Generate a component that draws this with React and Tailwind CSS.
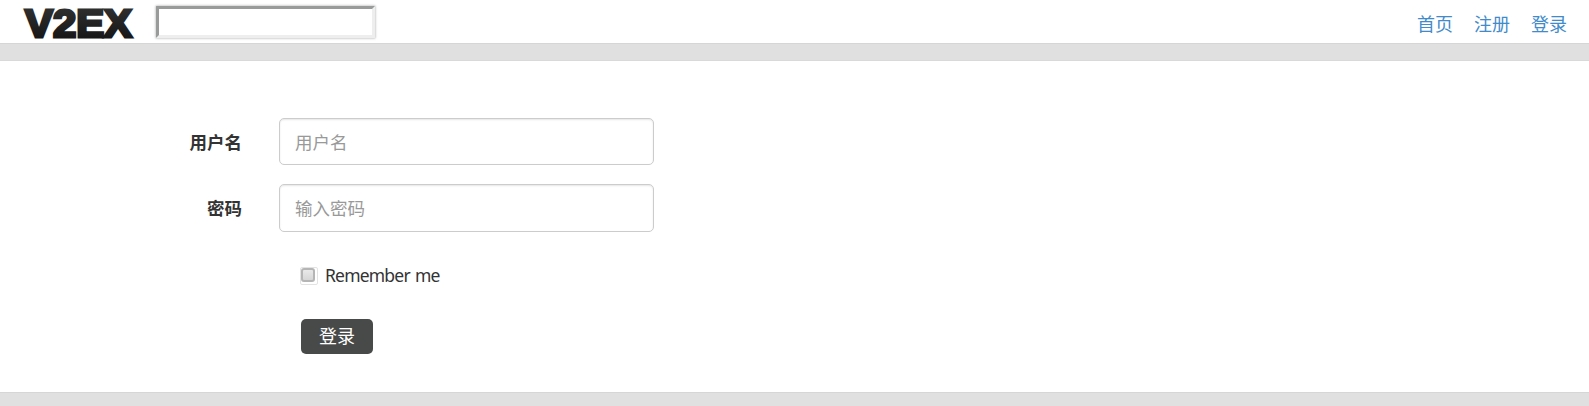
function Logo() {
  return (
    <svg className="-mb-[5px] block h-[48px] w-[117px] overflow-visible" viewBox="0 0 117 48" role="img" aria-label="V2EX">
      <defs>
        <linearGradient id="ink" x1="0" y1="0" x2="0" y2="1">
          <stop offset="0" stopColor="#333333" />
          <stop offset="1" stopColor="#121212" />
        </linearGradient>
      </defs>
      <text x="4" y="36.6" textLength="107" lengthAdjust="spacingAndGlyphs" fill="url(#ink)" stroke="url(#ink)" strokeWidth="2.8"
        className="font-['Liberation_Sans',sans-serif] text-[38px] font-bold">V2EX</text>
    </svg>
  );
}

function Field({ label, placeholder, type, className }) {
  return (
    <label className={`flex items-center ${className}`}>
      <span className="w-[242px] pt-[2px] text-right font-bold leading-none">{label}</span>
      <input type={type} placeholder={placeholder}
        className="ml-[37px] h-full w-[375px] rounded-[5px] border border-[#cccccc] bg-white px-[15px] shadow-[inset_0_1px_2px_rgba(0,0,0,0.1)] outline-none placeholder:font-['Noto_Sans_CJK_SC',sans-serif] placeholder:text-[#999999]" />
    </label>
  );
}

export default function App() {
  return (
    <div className="flex h-[406px] flex-col bg-[#e0e0e0] font-['Noto_Sans','Noto_Sans_CJK_SC',sans-serif] text-[17.5px] text-[#333333]">
      <header className="flex h-[43px] shrink-0 items-start bg-white pl-[21px] pr-[22px]">
        <Logo />
        <input type="text" aria-label="搜索"
          className="ml-[18px] mt-[6px] h-[32px] w-[219px] rounded-[1px] border-[3px] border-t-[#999b9a] border-l-[#999b9a] border-r-[#eeeeee] border-b-[#eeeeee] bg-white shadow-[0_0_2px_1px_rgba(0,0,0,0.18)] outline-none" />
        <nav className="ml-auto mt-[10px] flex gap-[21px] font-['Noto_Sans_CJK_SC',sans-serif] text-[18px] leading-[26px] text-[#428bca]">
          <a href="#">首页</a>
          <a href="#">注册</a>
          <a href="#">登录</a>
        </nav>
      </header>
      <div className="h-[18px] shrink-0 border-y border-t-[#d6d6d6] border-b-[#d9d9d9]" />
      <main className="h-[331px] shrink-0 bg-white pt-[57px]">
        <form>
          <Field label="用户名" placeholder="用户名" type="text" className="h-[47px]" />
          <Field label="密码" placeholder="输入密码" type="password" className="mt-[19px] h-[48px]" />
          <label className="ml-[300px] mt-[35px] flex h-[18px] w-fit items-center">
            <span className="flex h-[18px] w-[18px] items-start rounded-[2px] border border-[#e3e3e3] bg-white">
              <input type="checkbox" className="h-[14px] w-[14px] appearance-none rounded-[3px] border-2 border-[#b5b5b5] bg-linear-to-b from-[#e9e9e9] to-[#d6d6d6]" />
            </span>
            <span className="ml-[7px] -mt-px text-[17.5px] leading-none tracking-[-0.8px] [word-spacing:1.5px]">Remember me</span>
          </label>
          <button type="button" className="ml-[301px] mt-[34px] block h-[35px] w-[72px] rounded-[5px] bg-[#484a49] text-center text-[18px] leading-[35px] text-white">登录</button>
        </form>
      </main>
      <footer className="flex-1 border-t border-[#d6d6d6]" />
    </div>
  );
}
